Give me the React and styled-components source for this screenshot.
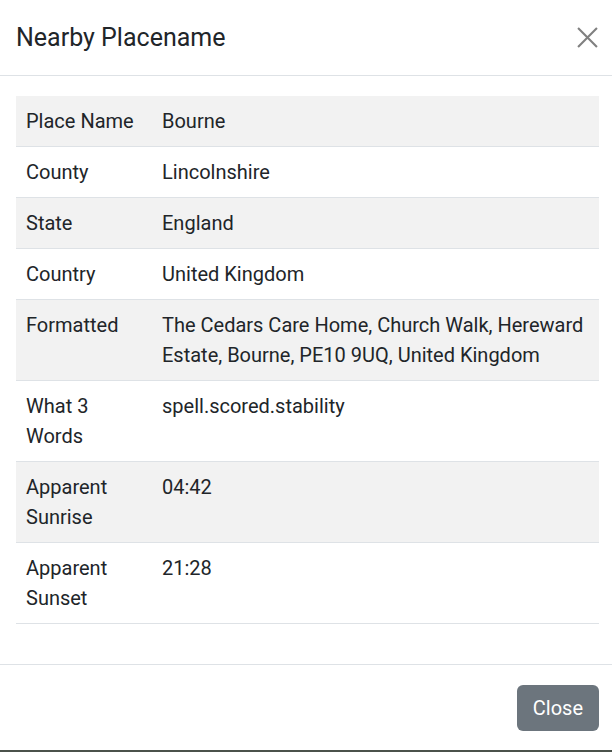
import React from 'react';
import styled, { createGlobalStyle } from 'styled-components';

const GlobalStyle = createGlobalStyle`
  html, body {
    margin: 0;
    padding: 0;
    background: #4b524b;
  }
  body {
    font-family: Roboto, "Liberation Sans", Arial, sans-serif;
    color: #212529;
  }
`;

const Modal = styled.div`
  width: 612px;
  height: 750px;
  background: #fff;
  display: flex;
  flex-direction: column;
  box-sizing: border-box;
`;

const Header = styled.div`
  height: 75px;
  border-bottom: 1px solid #dee2e6;
  display: flex;
  align-items: center;
  justify-content: space-between;
  padding: 0 13px 0 16px;
`;

const Title = styled.h5`
  margin: 0;
  font-size: 25px;
  font-weight: 400;
  line-height: 1.5;
  color: #212529;
`;

const CloseX = styled.button`
  width: 24px;
  height: 24px;
  padding: 0;
  border: 0;
  background: transparent;
  display: flex;
  align-items: center;
  justify-content: center;
  cursor: pointer;
`;

const Body = styled.div`
  flex: 1;
  padding: 20px 13px 40px 16px;
`;

const Table = styled.table`
  width: 100%;
  table-layout: fixed;
  border-collapse: collapse;
  font-size: 20px;
  line-height: 30px;
`;

const Row = styled.tr`
  background: ${p => (p.$striped ? '#f2f2f2' : '#fff')};
  border-bottom: 1px solid #dee2e6;
`;

const Label = styled.td`
  width: 116px;
  padding: 10px 10px;
  vertical-align: top;
`;

const Value = styled.td`
  padding: 10px 10px;
  vertical-align: top;
`;

const Footer = styled.div`
  border-top: 1px solid #dee2e6;
  padding: 20px 13px 19px 16px;
  display: flex;
  justify-content: flex-end;
`;

const Button = styled.button`
  font-family: inherit;
  font-size: 20px;
  line-height: 30px;
  padding: 8px 16px;
  color: #fff;
  background: #6c757d;
  border: 0;
  border-radius: 6px;
  cursor: pointer;
`;

const rows = [
  ['Place Name', 'Bourne'],
  ['County', 'Lincolnshire'],
  ['State', 'England'],
  ['Country', 'United Kingdom'],
  ['Formatted', 'The Cedars Care Home, Church Walk, Hereward Estate, Bourne, PE10 9UQ, United Kingdom'],
  ['What 3 Words', 'spell.scored.stability'],
  ['Apparent Sunrise', '04:42'],
  ['Apparent Sunset', '21:28'],
];

export default function App() {
  return (
    <>
      <GlobalStyle />
      <Modal>
        <Header>
          <Title>Nearby Placename</Title>
          <CloseX aria-label="Close">
            <svg width="21" height="21" viewBox="0 0 20 20">
              <path d="M1 1 L19 19 M19 1 L1 19" stroke="#808080" strokeWidth="2" />
            </svg>
          </CloseX>
        </Header>
        <Body>
          <Table>
            <tbody>
              {rows.map(([k, v], i) => (
                <Row key={k} $striped={i % 2 === 0}>
                  <Label>{k}</Label>
                  <Value>{v}</Value>
                </Row>
              ))}
            </tbody>
          </Table>
        </Body>
        <Footer>
          <Button>Close</Button>
        </Footer>
      </Modal>
    </>
  );
}
